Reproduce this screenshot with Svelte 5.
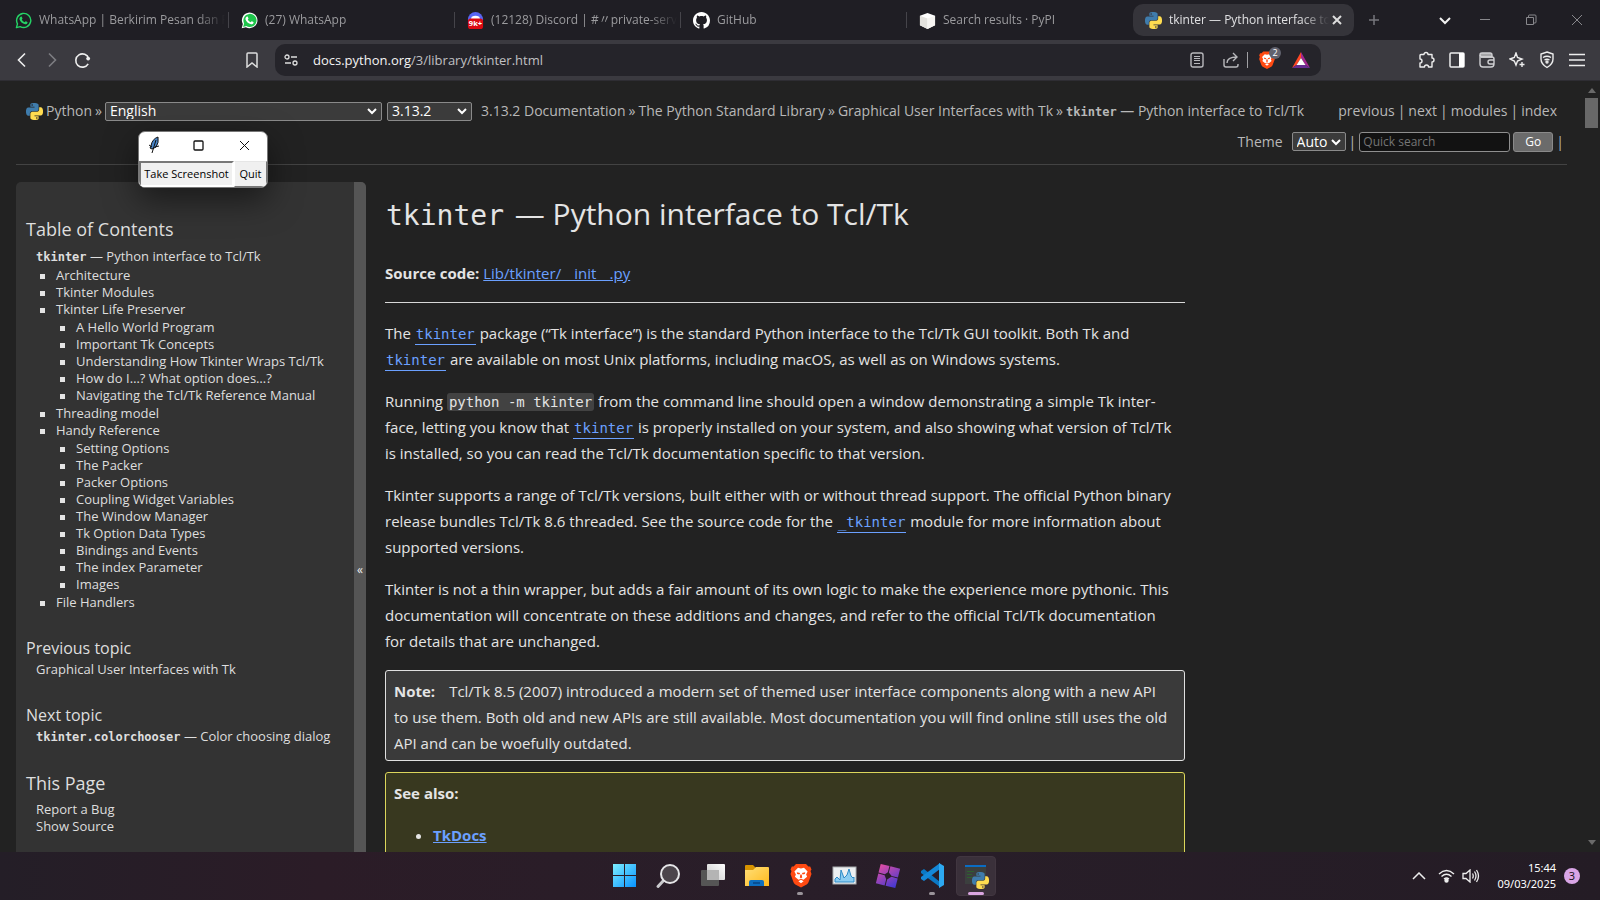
<script>
  const tabs = [
    { icon: 'wa-outline', title: 'WhatsApp | Berkirim Pesan dan Pa' },
    { icon: 'whatsapp', title: '(27) WhatsApp' },
    { icon: 'discord', title: '(12128) Discord | #〃private-serve' },
    { icon: 'github', title: 'GitHub' },
    { icon: 'pypi', title: 'Search results · PyPI' },
    { icon: 'python', title: 'tkinter — Python interface to', active: true }
  ];

  const contents = [
    { label: 'Architecture' },
    { label: 'Tkinter Modules' },
    {
      label: 'Tkinter Life Preserver',
      items: [
        'A Hello World Program',
        'Important Tk Concepts',
        'Understanding How Tkinter Wraps Tcl/Tk',
        'How do I…? What option does…?',
        'Navigating the Tcl/Tk Reference Manual'
      ]
    },
    { label: 'Threading model' },
    {
      label: 'Handy Reference',
      items: [
        'Setting Options',
        'The Packer',
        'Packer Options',
        'Coupling Widget Variables',
        'The Window Manager',
        'Tk Option Data Types',
        'Bindings and Events',
        'The index Parameter',
        'Images'
      ]
    },
    { label: 'File Handlers' }
  ];

  const tasks = [
    { icon: 'start', name: 'Start' },
    { icon: 'search', name: 'Search' },
    { icon: 'taskview', name: 'Task View' },
    { icon: 'folder', name: 'File Explorer' },
    { icon: 'brave', name: 'Brave', running: true },
    { icon: 'monitor', name: 'Resource Monitor' },
    { icon: 'tiles', name: 'Launcher' },
    { icon: 'vscode', name: 'Visual Studio Code', running: true },
    { icon: 'pyconsole', name: 'Python', active: true }
  ];
</script>

{#snippet pythonShapes()}
  <path fill="#3f7cac" d="M14.25.18l.9.2.73.26.59.3.45.32.34.34.25.34.16.33.1.3.04.26.02.2-.01.13V8.5l-.05.63-.13.55-.21.46-.26.38-.3.31-.33.25-.35.19-.35.14-.33.1-.3.07-.26.04-.21.02H8.77l-.69.05-.59.14-.5.22-.41.27-.33.32-.27.35-.2.36-.15.37-.1.35-.07.32-.04.27-.02.21v3.06H3.17l-.21-.03-.28-.07-.32-.12-.35-.18-.36-.26-.36-.36-.35-.46-.32-.59-.28-.73-.21-.88-.14-1.05-.05-1.23.06-1.22.16-1.04.24-.87.32-.71.36-.57.4-.44.42-.33.42-.24.4-.16.36-.1.32-.05.24-.01h.16l.06.01h8.16v-.83H6.18l-.01-2.75-.02-.37.05-.34.11-.31.17-.28.25-.26.31-.23.38-.2.44-.18.51-.15.58-.12.64-.1.71-.06.77-.04.84-.02 1.27.05zm-6.3 1.98l-.23.33-.08.41.08.41.23.34.33.22.41.09.41-.09.33-.22.23-.34.08-.41-.08-.41-.23-.33-.33-.22-.41-.09-.41.09z" />
  <path fill="#ffdc50" d="M21.04 6.11l.28.06.32.12.35.18.36.27.36.35.35.47.32.59.28.73.21.88.14 1.04.05 1.23-.06 1.23-.16 1.04-.24.86-.32.71-.36.57-.4.45-.42.33-.42.24-.4.16-.36.09-.32.05-.24.02-.16-.01h-8.22v.82h5.84l.01 2.76.02.36-.05.34-.11.31-.17.29-.25.25-.31.24-.38.2-.44.17-.51.15-.58.13-.64.09-.71.07-.77.04-.84.01-1.27-.04-1.07-.14-.9-.2-.73-.25-.59-.3-.45-.33-.34-.34-.25-.34-.16-.33-.1-.3-.04-.25-.02-.2.01-.13v-5.34l.05-.64.13-.54.21-.46.26-.38.3-.32.33-.24.35-.2.35-.14.33-.1.3-.06.26-.04.21-.02.13-.01h5.84l.69-.05.59-.14.5-.21.41-.28.33-.32.27-.35.2-.36.15-.36.1-.35.07-.32.04-.28.02-.21V6.07h2.09l.14.01zm-6.47 14.25l-.23.33-.08.41.08.41.23.33.33.23.41.08.41-.08.33-.23.23-.33.08-.41-.08-.41-.23-.33-.33-.23-.41-.08-.41.08z" />
{/snippet}

{#snippet lionShapes()}
  <path fill="#ff4a12" d="M7 1h10l2.400 2.600 1.800-.2 1.300 3-1 1.600 1 3-3 8.200a5 5 0 0 1-1.800 2.200L12 24.500l-5.700-3.100a5 5 0 0 1-1.800-2.200l-3-8.200 1-3-1-1.600 1.300-3 1.800.2z" />
  <path fill="#fff" d="M12 5.500l3-.7 3.600 3.800-1.500 2.900 1 2.200-3.600 3-2.500-1-2.500 1-3.600-3 1-2.200-1.500-2.900L9 4.800zM12 16.800l2.600 1.400-2.600 2-2.600-2z" />
  <path fill="#ff4a12" d="M7.800 9.200l3.300.8-.7 1.500-2.200-.6zM16.200 9.200l-3.300.8.7 1.500 2.200-.6zM11.300 11.500h1.400l.5 3-1.200.7-1.200-.7z" />
{/snippet}

{#snippet tabIcon(name)}
  {#if name === 'wa-outline'}
    <svg width="17" height="17" viewBox="0 0 24 24"><path d="M2 22l1.500-5.300A10 10 0 1 1 7.300 20.600z" fill="none" stroke="#25d366" stroke-width="2" stroke-linejoin="round" /><path fill="#25d366" d="M8.500 6.500c.5-.2 1-.1 1.200.4l.8 1.900c.1.400 0 .8-.9 1.700 1 1.900 2.300 3.100 4.200 3.900.8-1 1.200-1.400 1.600-1.200l2 .9c.5.300.4.900.2 1.500-.4 1.200-2 1.900-3.200 1.700-4.200-.7-7-3.600-8-6.700-.5-1.700.6-3.500 2.100-4.100z" /></svg>
  {:else if name === 'whatsapp'}
    <svg width="17" height="17" viewBox="0 0 24 24"><path d="M1 23l1.600-5.900A11 11 0 1 1 6.900 21.400z" fill="#fff" /><path d="M3 21l1.400-4.800a9.300 9.300 0 1 1 3.200 3.500z" fill="#1fc54c" /><path fill="#fff" d="M8.500 6.500c.5-.2 1-.1 1.200.4l.8 1.900c.1.400 0 .8-.9 1.700 1 1.900 2.300 3.100 4.200 3.900.8-1 1.200-1.400 1.600-1.200l2 .9c.5.300.4.900.2 1.500-.4 1.200-2 1.900-3.200 1.700-4.200-.7-7-3.600-8-6.700-.5-1.700.6-3.500 2.100-4.100z" /></svg>
  {:else if name === 'discord'}
    <svg width="17" height="17" viewBox="0 0 18 18"><circle cx="9" cy="8" r="8" fill="#5865f2" /><path d="M5 5q4-2 8 0l1 3H4z" fill="#fff" /><rect x="1" y="7" width="16" height="11" rx="3" fill="#dc0a12" /><text x="9" y="15" text-anchor="middle" font-family="Open Sans, sans-serif" font-size="8" font-weight="700" fill="#fff">9k+</text></svg>
  {:else if name === 'github'}
    <svg width="17" height="17" viewBox="0 0 16 16"><path fill="#fff" d="M8 0C3.580 0 0 3.580 0 8c0 3.540 2.290 6.530 5.470 7.590.4.070.55-.17.55-.38 0-.19-.01-.82-.01-1.490-2.010.37-2.530-.49-2.690-.94-.09-.23-.48-.94-.82-1.130-.28-.15-.68-.52-.01-.53.63-.01 1.080.58 1.230.82.72 1.210 1.870.87 2.330.66.07-.52.28-.87.51-1.070-1.780-.2-3.640-.89-3.640-3.950 0-.87.31-1.590.82-2.150-.08-.2-.36-1.020.08-2.120 0 0 .67-.21 2.200.82.64-.18 1.320-.27 2-.27s1.360.09 2 .27c1.530-1.040 2.200-.82 2.200-.82.44 1.100.16 1.920.08 2.120.51.56.82 1.270.82 2.150 0 3.070-1.870 3.750-3.650 3.950.29.25.54.73.54 1.480 0 1.070-.01 1.930-.01 2.200 0 .21.15.46.55.38A8.010 8.010 0 0 0 16 8c0-4.420-3.580-8-8-8z" /></svg>
  {:else if name === 'pypi'}
    <svg width="17" height="17" viewBox="0 0 18 18"><path fill="#fff" d="M9 1l8 3v10l-8 4-8-4V4z" /><path fill="#e3e2de" d="M1 4l8 3v11l-8-4z" /><path fill="#f6f5f2" d="M9 7l8-3v10l-8 4z" /></svg>
  {:else}
    <svg width="17" height="17" viewBox="0 0 24 24">{@render pythonShapes()}</svg>
  {/if}
{/snippet}

{#snippet taskIcon(name)}
  <svg width="26" height="26" viewBox="0 0 26 26">
    <defs>
      <linearGradient id="winFill" gradientUnits="userSpaceOnUse" x1="1" y1="1" x2="24" y2="24"><stop offset="0" stop-color="#7ff0ff" /><stop offset="1" stop-color="#0a94ff" /></linearGradient>
      <linearGradient id="tileFill" gradientUnits="userSpaceOnUse" x1="2" y1="2" x2="24" y2="24"><stop offset="0" stop-color="#ec4fa0" /><stop offset="1" stop-color="#3436d6" /></linearGradient>
      <linearGradient id="folderFill" x1="0" y1="0" x2="1" y2="1"><stop offset="0" stop-color="#ffdf78" /><stop offset="1" stop-color="#ffb91c" /></linearGradient>
      <linearGradient id="viewFill" x1="0" y1="1" x2="1" y2="0"><stop offset="0" stop-color="#c8c8c8" /><stop offset="1" stop-color="#fff" /></linearGradient>
    </defs>
    {#if name === 'start'}
      <path fill="url(#winFill)" d="M2 1h11v11H2zM14 1h11v11H14zM2 13h11v11H2zM14 13h11v11H14z" />
    {:else if name === 'search'}
      <path d="M9 17l-6 6.500" stroke="#c9c9cc" stroke-width="3" stroke-linecap="round" />
      <circle cx="15" cy="11" r="9" fill="#4c454b" stroke="#e6e6e8" stroke-width="2" />
    {:else if name === 'taskview'}
      <rect x="8" y="1" width="18" height="16" rx="1" fill="url(#viewFill)" />
      <rect x="2" y="7" width="18" height="16" rx="1" fill="#555" /><path d="M8 7h12v10H8z" fill="#b4b4b4" />
    {:else if name === 'folder'}
      <path fill="#d79300" d="M2 3q0-1 1-1h7l3 3h12v6H2z" />
      <path fill="url(#folderFill)" d="M2 7h8l3-3h12q1 0 1 1v18H2z" />
      <path fill="#0e6fc0" d="M6 23v-4q0-2 2-2h11q2 0 2 2v4z" /><path d="M10 20h7" stroke="#084f93" stroke-width="2" />
    {:else if name === 'brave'}
      <g transform="translate(2 0)">{@render lionShapes()}</g>
    {:else if name === 'monitor'}
      <rect x="2" y="4" width="23" height="17" fill="#eceff1" stroke="#a9adb0" />
      <path fill="#8ccdf2" stroke="#2f8bc7" d="M4 19v-3l2-2 3 3 1-10 3 8 3-3 2-6 2 7 2 2 1-1v5z" />
    {:else if name === 'tiles'}
      <g transform="rotate(14 13 13)" fill="url(#tileFill)">
        <path d="M3 3h9v6.500L9.500 12H3zM13 3h10v9h-6.500L13 9.500zM3 13h6.500l2.500 3.500V23H3zM16.500 13H23v10H13v-6.500z" />
      </g>
    {:else if name === 'vscode'}
      <path fill="#0b78c4" d="M2 8l3-2 16 13v5L2 10z" />
      <path fill="#1488d8" d="M2 16l3 2L21 6V0L2 14z" />
      <path fill="#2da9f1" d="M20 0l5 3v19l-5 3z" />
    {:else}
      <rect x="2" y="2" width="21" height="19" fill="#3b3f3e" /><path fill="#0a6cc4" d="M2 2h21v2H2z" />
      <path d="M4 8.500h7M4 11.500h5M4 14.500h5" stroke="#2f5f2f" stroke-width="1" />
      <svg x="9" y="9" width="17" height="17" viewBox="0 0 24 24">{@render pythonShapes()}</svg>
    {/if}
  </svg>
{/snippet}

<div class="screen">
  <header class="tabstrip">
    <nav class="tabs" aria-label="Open tabs">
      {#each tabs as tab}
        <div class="tab" class:active={tab.active}>
          <button class="tab-button">
            {@render tabIcon(tab.icon)}
            <span class="tab-title">{tab.title}</span>
          </button>
          {#if tab.active}
            <button class="icon-button close-tab" aria-label="Close tab"><svg width="10" height="10" viewBox="0 0 10 10"><path d="M1 1l8 8M9 1l-8 8" stroke="#ddd" stroke-width="2" /></svg></button>
          {/if}
        </div>
      {/each}
      <button class="icon-button new-tab" aria-label="New tab"><svg width="12" height="12" viewBox="0 0 12 12"><path d="M6 1v10M1 6h10" stroke="#77777c" stroke-width="1.500" /></svg></button>
    </nav>
    <div class="window-buttons">
      <button class="icon-button" aria-label="Search tabs"><svg width="12" height="12" viewBox="0 0 12 12"><path d="M1 4l5 5 5-5" fill="none" stroke="#f2f2f2" stroke-width="2" /></svg></button>
      <button class="icon-button" aria-label="Minimize"><svg width="12" height="12" viewBox="0 0 12 12"><path d="M1 5.500h10" stroke="#88888c" /></svg></button>
      <button class="icon-button" aria-label="Restore"><svg width="12" height="12" viewBox="0 0 12 12"><path d="M3.500 3V2q0-1 1-1H10q1 0 1 1v6q0 1-1 1H9M1.500 3.500h7v7h-7z" fill="none" stroke="#88888c" /></svg></button>
      <button class="icon-button" aria-label="Close"><svg width="12" height="12" viewBox="0 0 12 12"><path d="M1 1l10 10M11 1L1 11" stroke="#88888c" /></svg></button>
    </div>
  </header>

  <div class="toolbar">
    <div class="nav-buttons">
      <button class="icon-button" aria-label="Back"><svg width="16" height="16" viewBox="0 0 16 16"><path d="M11 1.500L4.500 8l6.500 6.500" fill="none" stroke="#eee" stroke-width="1.600" /></svg></button>
      <button class="icon-button" aria-label="Forward"><svg width="16" height="16" viewBox="0 0 16 16"><path d="M5 1.500L11.500 8 5 14.500" fill="none" stroke="#7d7d82" stroke-width="1.600" /></svg></button>
      <button class="icon-button" aria-label="Reload"><svg width="17" height="17" viewBox="0 0 18 18"><path d="M15 12.500A7 7 0 1 1 15.600 7" fill="none" stroke="#eee" stroke-width="1.700" /><circle cx="15" cy="7" r="2" fill="#eee" /></svg></button>
    </div>
    <button class="icon-button bookmark" aria-label="Bookmark"><svg width="14" height="16" viewBox="0 0 14 16"><path d="M2 2q0-1 1-1h8q1 0 1 1v13l-5-4-5 4z" fill="none" stroke="#ddd" stroke-width="1.500" /></svg></button>
    <div class="address">
      <svg width="14" height="12" viewBox="0 0 14 12" fill="none" stroke="#ddd" stroke-width="1.300"><circle cx="3" cy="3" r="2" /><path d="M7 3h6M1 9h6" /><circle cx="11" cy="9" r="2" /></svg>
      <a class="url" href="#top"><b>docs.python.org</b>/3/library/tkinter.html</a>
      <button class="icon-button" aria-label="Reader mode"><svg width="14" height="16" viewBox="0 0 14 16" fill="none" stroke="#b8b8bc"><rect x="1" y="1" width="12" height="14" rx="2" stroke-width="1.400" /><path d="M4 4.500h6M4 6.500h6M4 8.500h6M4 11.500h6" /></svg></button>
      <button class="icon-button share" aria-label="Share"><svg width="18" height="18" viewBox="0 0 18 18" fill="none" stroke="#b8b8bc" stroke-width="1.400"><path d="M2 8v6q0 2 2 2h10q2 0 2-2v-1M5 12q0-6 10-6M11 2l4 4-4 4" /></svg></button>
      <span class="divider"></span>
      <button class="icon-button shield" aria-label="Brave Shields"><svg width="18" height="20" viewBox="0 0 24 25">{@render lionShapes()}</svg><span class="badge">2</span></button>
      <button class="icon-button rewards" aria-label="Rewards"><svg width="18" height="16" viewBox="0 0 18 16"><path fill="#ff4724" d="M9 0v6L4.500 13 0 16z" /><path fill="#a3278f" d="M9 0l9 16-4.500-3L9 6z" /><path fill="#662d91" d="M0 16l4.500-3h9l4.500 3z" /><path fill="#fff" d="M9 6l4.500 7h-9z" /></svg></button>
    </div>
    <div class="actions">
      <button class="icon-button" aria-label="Extensions"><svg width="18" height="18" viewBox="0 0 18 18" fill="none" stroke="#eee" stroke-width="1.400" stroke-linejoin="round"><path d="M3 3.500h3a2 2 0 1 1 4 0h4V7a2 2 0 1 1 0 4v5h-3.500a2 2 0 1 0-4 0H2v-4a2 2 0 1 0 0-4V4.500q0-1 1-1z" /></svg></button>
      <button class="icon-button" aria-label="Sidebar"><svg width="16" height="16" viewBox="0 0 16 16"><rect x="1" y="1" width="14" height="14" rx="1" fill="none" stroke="#eee" stroke-width="1.500" /><path d="M10 1h5v14h-5z" fill="#fff" /></svg></button>
      <button class="icon-button" aria-label="Wallet"><svg width="16" height="16" viewBox="0 0 16 16" fill="none" stroke="#cfcfd2" stroke-width="1.400"><path d="M1 2.500Q1 1 3 1h8q2 0 2 2v2H2z" fill="#a5a5a8" /><path d="M1 3v9q0 3 3 3h8q3 0 3-3V7q0-2-2-2H2M15 8h-4q-2 0-2 2t2 2h4" /></svg></button>
      <button class="icon-button" aria-label="Leo AI"><svg width="16" height="16" viewBox="0 0 16 16" fill="none" stroke="#eee" stroke-width="1.400"><path d="M7 1l1.500 4.500L13 7 8.500 9 7 13 5.300 9 1 7l4.300-1.500zM13 10v5M10.500 12.500h5" /></svg></button>
      <button class="icon-button" aria-label="VPN"><svg width="16" height="18" viewBox="0 0 16 18" fill="none" stroke="#eee" stroke-width="1.400"><path d="M8 1l6 2v5q0 5-6 8.500Q2 13 2 8V3zM4 6.500q4-2.500 8 0M5.500 9q2.500-1.500 5 0" /><circle cx="8" cy="11" r="1" /></svg></button>
      <button class="icon-button" aria-label="Menu"><svg width="16" height="14" viewBox="0 0 16 14"><path d="M0 1.500h16M0 7h16M0 12.500h16" stroke="#eee" stroke-width="1.500" /></svg></button>
    </div>
  </div>

  <div class="viewport" id="top">
    <div class="page">
      <div class="related">
        <div class="related-row">
          <nav class="crumbs" aria-label="Breadcrumb">
            <svg width="17" height="17" viewBox="0 0 24 24">{@render pythonShapes()}</svg>
            <a class="home" href="#top">Python</a><span>»</span>
            <select class="language" aria-label="Language"><option>English</option></select>
            <select class="version" aria-label="Version"><option>3.13.2</option></select>
            <a class="docs" href="#top">3.13.2 Documentation</a><span>»</span>
            <a href="#top">The Python Standard Library</a><span>»</span>
            <a href="#top">Graphical User Interfaces with Tk</a><span>»</span>
            <a href="#top"><code>tkinter</code> — Python interface to Tcl/Tk</a>
          </nav>
          <nav class="pager" aria-label="Pages">
            <a href="#top">previous</a><span>|</span><a href="#top">next</a><span>|</span><a href="#top">modules</a><span>|</span><a href="#top">index</a>
          </nav>
        </div>
        <form class="tools">
          <label for="theme">Theme</label>
          <select id="theme"><option>Auto</option></select>
          <span>|</span>
          <input type="text" placeholder="Quick search" aria-label="Quick search" />
          <button type="button">Go</button>
          <span>|</span>
        </form>
      </div>

      <div class="columns">
        <aside class="sidebar">
          <div class="sidebar-body">
            <h3>Table of Contents</h3>
            <p class="toc-root"><a href="#top"><code>tkinter</code> — Python interface to Tcl/Tk</a></p>
            <ul>
              {#each contents as entry}
                <li>
                  <a href="#top">{entry.label}</a>
                  {#if entry.items}
                    <ul>
                      {#each entry.items as item}
                        <li><a href="#top">{item}</a></li>
                      {/each}
                    </ul>
                  {/if}
                </li>
              {/each}
            </ul>
            <h4>Previous topic</h4>
            <p><a href="#top">Graphical User Interfaces with Tk</a></p>
            <h4>Next topic</h4>
            <p><a href="#top"><code>tkinter.colorchooser</code> — Color choosing dialog</a></p>
            <h3 class="this-page">This Page</h3>
            <p><a href="#top">Report a Bug</a></p>
            <p><a href="#top">Show Source</a></p>
          </div>
          <button class="collapse" aria-label="Collapse sidebar">«</button>
        </aside>

        <main class="body">
          <h1><code>tkinter</code> — Python interface to Tcl/Tk</h1>
          <p><strong>Source code:</strong> <a href="#top">Lib/tkinter/__init__.py</a></p>
          <hr />
          <p>The <a class="ref" href="#top"><code>tkinter</code></a> package (“Tk interface”) is the standard Python interface to the Tcl/Tk GUI toolkit. Both Tk and<br /><a class="ref" href="#top"><code>tkinter</code></a> are available on most Unix platforms, including macOS, as well as on Windows systems.</p>
          <p>Running <code class="literal">python -m tkinter</code> from the command line should open a window demonstrating a simple Tk inter-<br />face, letting you know that <a class="ref" href="#top"><code>tkinter</code></a> is properly installed on your system, and also showing what version of Tcl/Tk<br />is installed, so you can read the Tcl/Tk documentation specific to that version.</p>
          <p>Tkinter supports a range of Tcl/Tk versions, built either with or without thread support. The official Python binary<br />release bundles Tcl/Tk 8.6 threaded. See the source code for the <a class="ref" href="#top"><code>_tkinter</code></a> module for more information about<br />supported versions.</p>
          <p>Tkinter is not a thin wrapper, but adds a fair amount of its own logic to make the experience more pythonic. This<br />documentation will concentrate on these additions and changes, and refer to the official Tcl/Tk documentation<br />for details that are unchanged.</p>
          <div class="note"><strong>Note:</strong>Tcl/Tk 8.5 (2007) introduced a modern set of themed user interface components along with a new API<br />to use them. Both old and new APIs are still available. Most documentation you will find online still uses the old<br />API and can be woefully outdated.</div>
          <div class="seealso">
            <strong>See also:</strong>
            <ul><li><a href="#top">TkDocs</a></li></ul>
          </div>
        </main>
      </div>
    </div>
    <div class="scrollbar" aria-hidden="true">
      <span class="arrow up"></span>
      <span class="thumb"></span>
      <span class="arrow down"></span>
    </div>
  </div>

  <footer class="taskbar">
    <span></span>
    <nav class="tasks" aria-label="Taskbar">
      {#each tasks as task}
        <button class="task" class:running={task.running} class:current={task.active} aria-label={task.name}>{@render taskIcon(task.icon)}</button>
      {/each}
    </nav>
    <div class="tray">
      <button class="icon-button" aria-label="Show hidden icons"><svg width="14" height="8" viewBox="0 0 14 8"><path d="M1 7l6-6 6 6" fill="none" stroke="#eee" stroke-width="1.500" /></svg></button>
      <button class="icon-button" aria-label="Network"><svg width="17" height="14" viewBox="0 0 17 14" fill="none" stroke="#eee" stroke-width="1.400"><path d="M1 5q7.500-7 15 0M3.500 7.500q5-4.500 10 0M6 10q2.500-2 5 0" /><circle cx="8.500" cy="11.500" r="1.500" fill="#eee" /></svg></button>
      <button class="icon-button" aria-label="Volume"><svg width="18" height="14" viewBox="0 0 18 14" fill="none" stroke="#eee" stroke-width="1.300"><path d="M1 4.500h3L8 1v12L4 9.500H1zM10.500 4.500q1.500 2.500 0 5M12.500 2.500q3 4.500 0 9M14.500 1q4 6 0 12" /></svg></button>
      <div class="clock"><span>15:44</span><span>09/03/2025</span></div>
      <span class="count">3</span>
    </div>
  </footer>

  <section class="tk-window" aria-label="Tk window">
    <div class="tk-title">
      <svg width="12" height="18" viewBox="0 0 12 18"><path d="M10 1Q4 3 3 10l-1 2 2 1 4-2q3-4 2-10z" fill="#4a86c8" stroke="#111" /><path d="M8 4L4 17M1 9l3 2M11 10l-4 1" stroke="#111" fill="none" /></svg>
      <button class="icon-button" aria-label="Maximize"><svg width="11" height="11" viewBox="0 0 11 11"><rect x="1" y="1" width="9" height="9" rx="1" fill="none" stroke="#111" stroke-width="1.300" /></svg></button>
      <button class="icon-button" aria-label="Close window"><svg width="11" height="11" viewBox="0 0 11 11"><path d="M1 1l9 9M10 1l-9 9" stroke="#111" /></svg></button>
    </div>
    <div class="tk-body">
      <button class="pressed">Take Screenshot</button>
      <button>Quit</button>
    </div>
  </section>
</div>

<style>
  :global(body) { background: #222; overflow: hidden; }
  * { box-sizing: border-box; }
  button, select, input { font: inherit; }
  a { color: inherit; text-decoration: none; }
  h1, h3, h4, p, ul { margin: 0; padding: 0; font-weight: 400; }
  svg { flex: none; display: block; }

  .screen {
    position: relative;
    display: flex;
    flex-direction: column;
    height: 100vh;
    overflow: hidden;
    font-family: "Open Sans", "Noto Sans CJK JP", sans-serif;
    font-size: 15px;
    line-height: 26px;
    color: #e4e4e4;
  }
  .icon-button {
    display: flex;
    align-items: center;
    justify-content: center;
    padding: 0;
    border: 0;
    background: none;
  }

  .tabstrip { display: flex; flex: none; height: 40px; padding-left: 3px; background: #1f1e24; }
  .tabs { display: flex; flex: 1; min-width: 0; align-items: center; }
  .tab {
    display: flex;
    flex: 0 1 226px;
    min-width: 0;
    align-items: center;
    height: 32px;
    padding: 0 12px;
    font-size: 12px;
    color: #9b9b9e;
  }
  .tab:not(.active) { padding-right: 4px; background: linear-gradient(#45444a, #45444a) right center / 1px 16px no-repeat; }
  .tab:nth-child(5) { background: none; }
  .tab.active { flex-basis: 221px; border-radius: 10px; background: #35343a; color: #e0e0e2; }
  .tab-button {
    display: flex;
    flex: 1;
    min-width: 0;
    align-items: center;
    gap: 7px;
    padding: 0;
    border: 0;
    background: none;
    color: inherit;
    text-align: left;
  }
  .tab-title {
    flex: 1;
    overflow: hidden;
    white-space: nowrap;
    mask-image: linear-gradient(90deg, #000 calc(100% - 28px), transparent);
  }
  .close-tab { margin-left: 3px; }
  .new-tab { width: 40px; height: 32px; }
  .window-buttons { display: flex; }
  .window-buttons .icon-button { width: 46px; }
  .window-buttons .icon-button:first-child { width: 34px; }

  .toolbar {
    display: flex;
    flex: none;
    align-items: center;
    height: 41px;
    padding: 0 14px;
    border-bottom: 1px solid #2e2d33;
    background: #3b3a40;
  }
  .nav-buttons { display: flex; gap: 14px; }
  .bookmark { margin-left: auto; }
  .address {
    display: flex;
    flex: 0 1 1046px;
    align-items: center;
    height: 32px;
    margin: 0 97px 0 16px;
    padding: 0 11px 0 9px;
    border-radius: 10px;
    background: #25242a;
    font-size: 13px;
  }
  .url { flex: 1; margin-left: 15px; color: #c0c0c3; }
  .url b { color: #f4f4f4; font-weight: 400; }
  .share { margin-left: 18px; }
  .divider { width: 1px; height: 16px; margin: 0 10px 0 7px; background: #a0a0a4; }
  .shield { position: relative; margin-right: 16px; }
  .badge {
    position: absolute;
    top: -3px;
    left: 11px;
    width: 12px;
    border-radius: 6px;
    background: #62636f;
    color: #fff;
    font-size: 9px;
    line-height: 12px;
  }
  .actions { display: flex; gap: 12px; }
  .actions .icon-button { width: 18px; }

  .viewport { display: flex; flex: 1; min-height: 0; background: #222; }
  .page { flex: 1; min-width: 0; padding: 0 16px; overflow: hidden; }
  .scrollbar { display: flex; flex: none; flex-direction: column; width: 17px; align-items: center; padding: 7px 0; }
  .arrow { border: 4px solid transparent; }
  .up { border-top: 0; border-bottom: 5px solid #6a6a6a; }
  .down { margin-top: auto; border-bottom: 0; border-top: 5px solid #6a6a6a; }
  .thumb { width: 13px; height: 30px; margin-top: 5px; background: #686868; }

  .related { height: 84px; padding-top: 17px; border-bottom: 1px solid #434343; color: #b8b8b8; font-size: 14px; }
  .related-row { display: flex; justify-content: space-between; padding: 0 10px; white-space: nowrap; }
  .crumbs, .pager { display: flex; align-items: center; gap: 3px; }
  select {
    appearance: none;
    height: 19px;
    padding: 0 16px 0 4px;
    border: 1px solid #8a8a8a;
    border-radius: 2px;
    background: #3b3b3b url("data:image/svg+xml,%3Csvg xmlns='http://www.w3.org/2000/svg' width='12' height='8'%3E%3Cpath d='M2 2l4 4 4-4' fill='none' stroke='white' stroke-width='2'/%3E%3C/svg%3E") right 3px center no-repeat;
    color: #fff;
    font-size: 14px;
    line-height: 16px;
  }
  .language { width: 277px; }
  .version { width: 85px; margin-left: 2px; }
  .docs { margin-left: 6px; }
  code { font-family: "DejaVu Sans Mono", monospace; font-size: 14px; line-height: 1; }
  .related code { font-weight: 700; font-size: 12px; }
  .tools { display: flex; align-items: center; justify-content: flex-end; gap: 3px; height: 35px; padding-right: 3px; }
  .tools label { margin-right: 6px; }
  .tools select { width: 54px; }
  .tools input {
    width: 151px;
    height: 20px;
    padding: 0 3px;
    border: 1px solid #8f8f8f;
    border-radius: 3px;
    background: #121212;
    color: #ddd;
    font-size: 12px;
  }
  .tools input::placeholder { color: #757575; }
  .tools button {
    width: 40px;
    height: 20px;
    padding: 0;
    border: 1px solid #8a8a8a;
    border-radius: 3px;
    background: #6b6b6b;
    color: #fff;
    font-size: 12px;
    line-height: 18px;
  }

  .columns { display: flex; align-items: flex-start; gap: 19px; margin-top: 17px; }
  .sidebar { display: flex; flex: none; width: 350px; border-radius: 5px 5px 0 0; overflow: hidden; background: #333; }
  .sidebar-body {
    flex: 1;
    min-height: 776px;
    padding: 33px 10px 0;
    color: #dedede;
    font-size: 13px;
    line-height: 17px;
  }
  .sidebar h3 { font-size: 18px; line-height: 28px; }
  .sidebar h4 { margin-top: 24px; font-size: 16px; line-height: 26px; }
  .sidebar p { padding-left: 10px; }
  .sidebar code { font-size: 12px; font-weight: 700; }
  .sidebar .toc-root { margin: 5px 0 2px; }
  .sidebar .this-page { margin: 24px 0 4px; }
  .sidebar ul { padding-left: 20px; list-style: none; }
  .sidebar li { position: relative; }
  .sidebar li ul { padding-top: 1px; padding-bottom: 1px; }
  .sidebar-body > ul { padding-left: 30px; }
  .sidebar li::before { content: ""; position: absolute; top: 7px; left: -16px; width: 5px; height: 5px; background: #e4e4e4; }
  .collapse { width: 12px; padding: 0; border: 0; background: #555; color: #eee; font-size: 12px; }

  .body { flex: 0 1 800px; min-width: 0; color: #e4e4e4; }
  .body a { color: #6ba0ff; text-decoration: underline; }
  .body .ref { padding: 0 1px 1px; border-bottom: 1px solid #6ba0ff; text-decoration: none; }
  h1 { padding: 11px 0 25px; font-size: 30px; line-height: 42px; }
  h1 code { padding: 0 3px 0 1px; font-size: 28px; }
  .body p { margin-bottom: 16px; white-space: nowrap; }
  .body hr { height: 1px; margin: 0 0 17px; border: 0; background: #d8d8d8; }
  .literal { padding: 1px 2px; border-radius: 3px; background: #424242; }
  .note, .seealso { padding: 7px 8px 4px; border: 1px solid #e0e0e0; border-radius: 3px; background: #3a3a3a; white-space: nowrap; }
  .note strong { margin-right: 14px; }
  .seealso { margin-top: 11px; border-color: #dcd65b; background: #38381f; }
  .seealso ul { margin: 16px 0 16px 39px; font-weight: 700; }

  .taskbar {
    display: grid;
    flex: none;
    grid-template-columns: 1fr auto 1fr;
    align-items: center;
    height: 48px;
    background: linear-gradient(90deg, #241e27, #2b1c27 20%, #291e29 50%, #241c25);
  }
  .tasks { display: flex; gap: 4px; }
  .task {
    position: relative;
    display: flex;
    align-items: center;
    justify-content: center;
    width: 40px;
    height: 40px;
    padding: 0;
    border: 1px solid transparent;
    border-radius: 4px;
    background: none;
  }
  .task.current { border-color: #413640; background: #3a303a; }
  .task.running::after, .task.current::after {
    content: "";
    position: absolute;
    bottom: 0;
    width: 6px;
    height: 3px;
    border-radius: 2px;
    background: #9a949a;
  }
  .task.current::after { width: 16px; background: #d9a5e0; }
  .tray { display: flex; justify-content: flex-end; align-items: center; padding-right: 20px; font-family: "Noto Sans", sans-serif; font-size: 11px; line-height: 16px; color: #fff; }
  .tray .icon-button { margin-right: 7px; }
  .tray .icon-button:first-child { margin-right: 12px; }
  .clock { display: flex; flex-direction: column; align-items: flex-end; margin: 0 8px 0 10px; }
  .count { width: 16px; border-radius: 8px; background: #d9a5e6; color: #1c1420; text-align: center; }

  .tk-window {
    position: absolute;
    top: 131px;
    left: 138px;
    width: 130px;
    overflow: hidden;
    border: 1px solid #777;
    border-radius: 7px;
    background: #fff;
    box-shadow: 0 12px 32px rgba(0, 0, 0, 0.5);
    font-size: 12px;
    color: #000;
  }
  .tk-title { display: flex; align-items: center; height: 29px; padding: 0 0 3px 9px; }
  .tk-title .icon-button { width: 46px; }
  .tk-title svg + .icon-button { margin-left: auto; }
  .tk-body { display: flex; height: 26px; background: #f0f0f0; }
  .tk-body button {
    flex: 1;
    padding: 0;
    border: 1px solid #ddd;
    border-color: #e6e6e6 #777 #777 #fff;
    background: #f0f0f0;
    color: #000;
    font-size: 11px;
    line-height: 20px;
    white-space: nowrap;
  }
  .tk-body .pressed { flex: none; width: 95px; border: 2px solid; border-color: #777 #fff #fff #777; }
</style>
